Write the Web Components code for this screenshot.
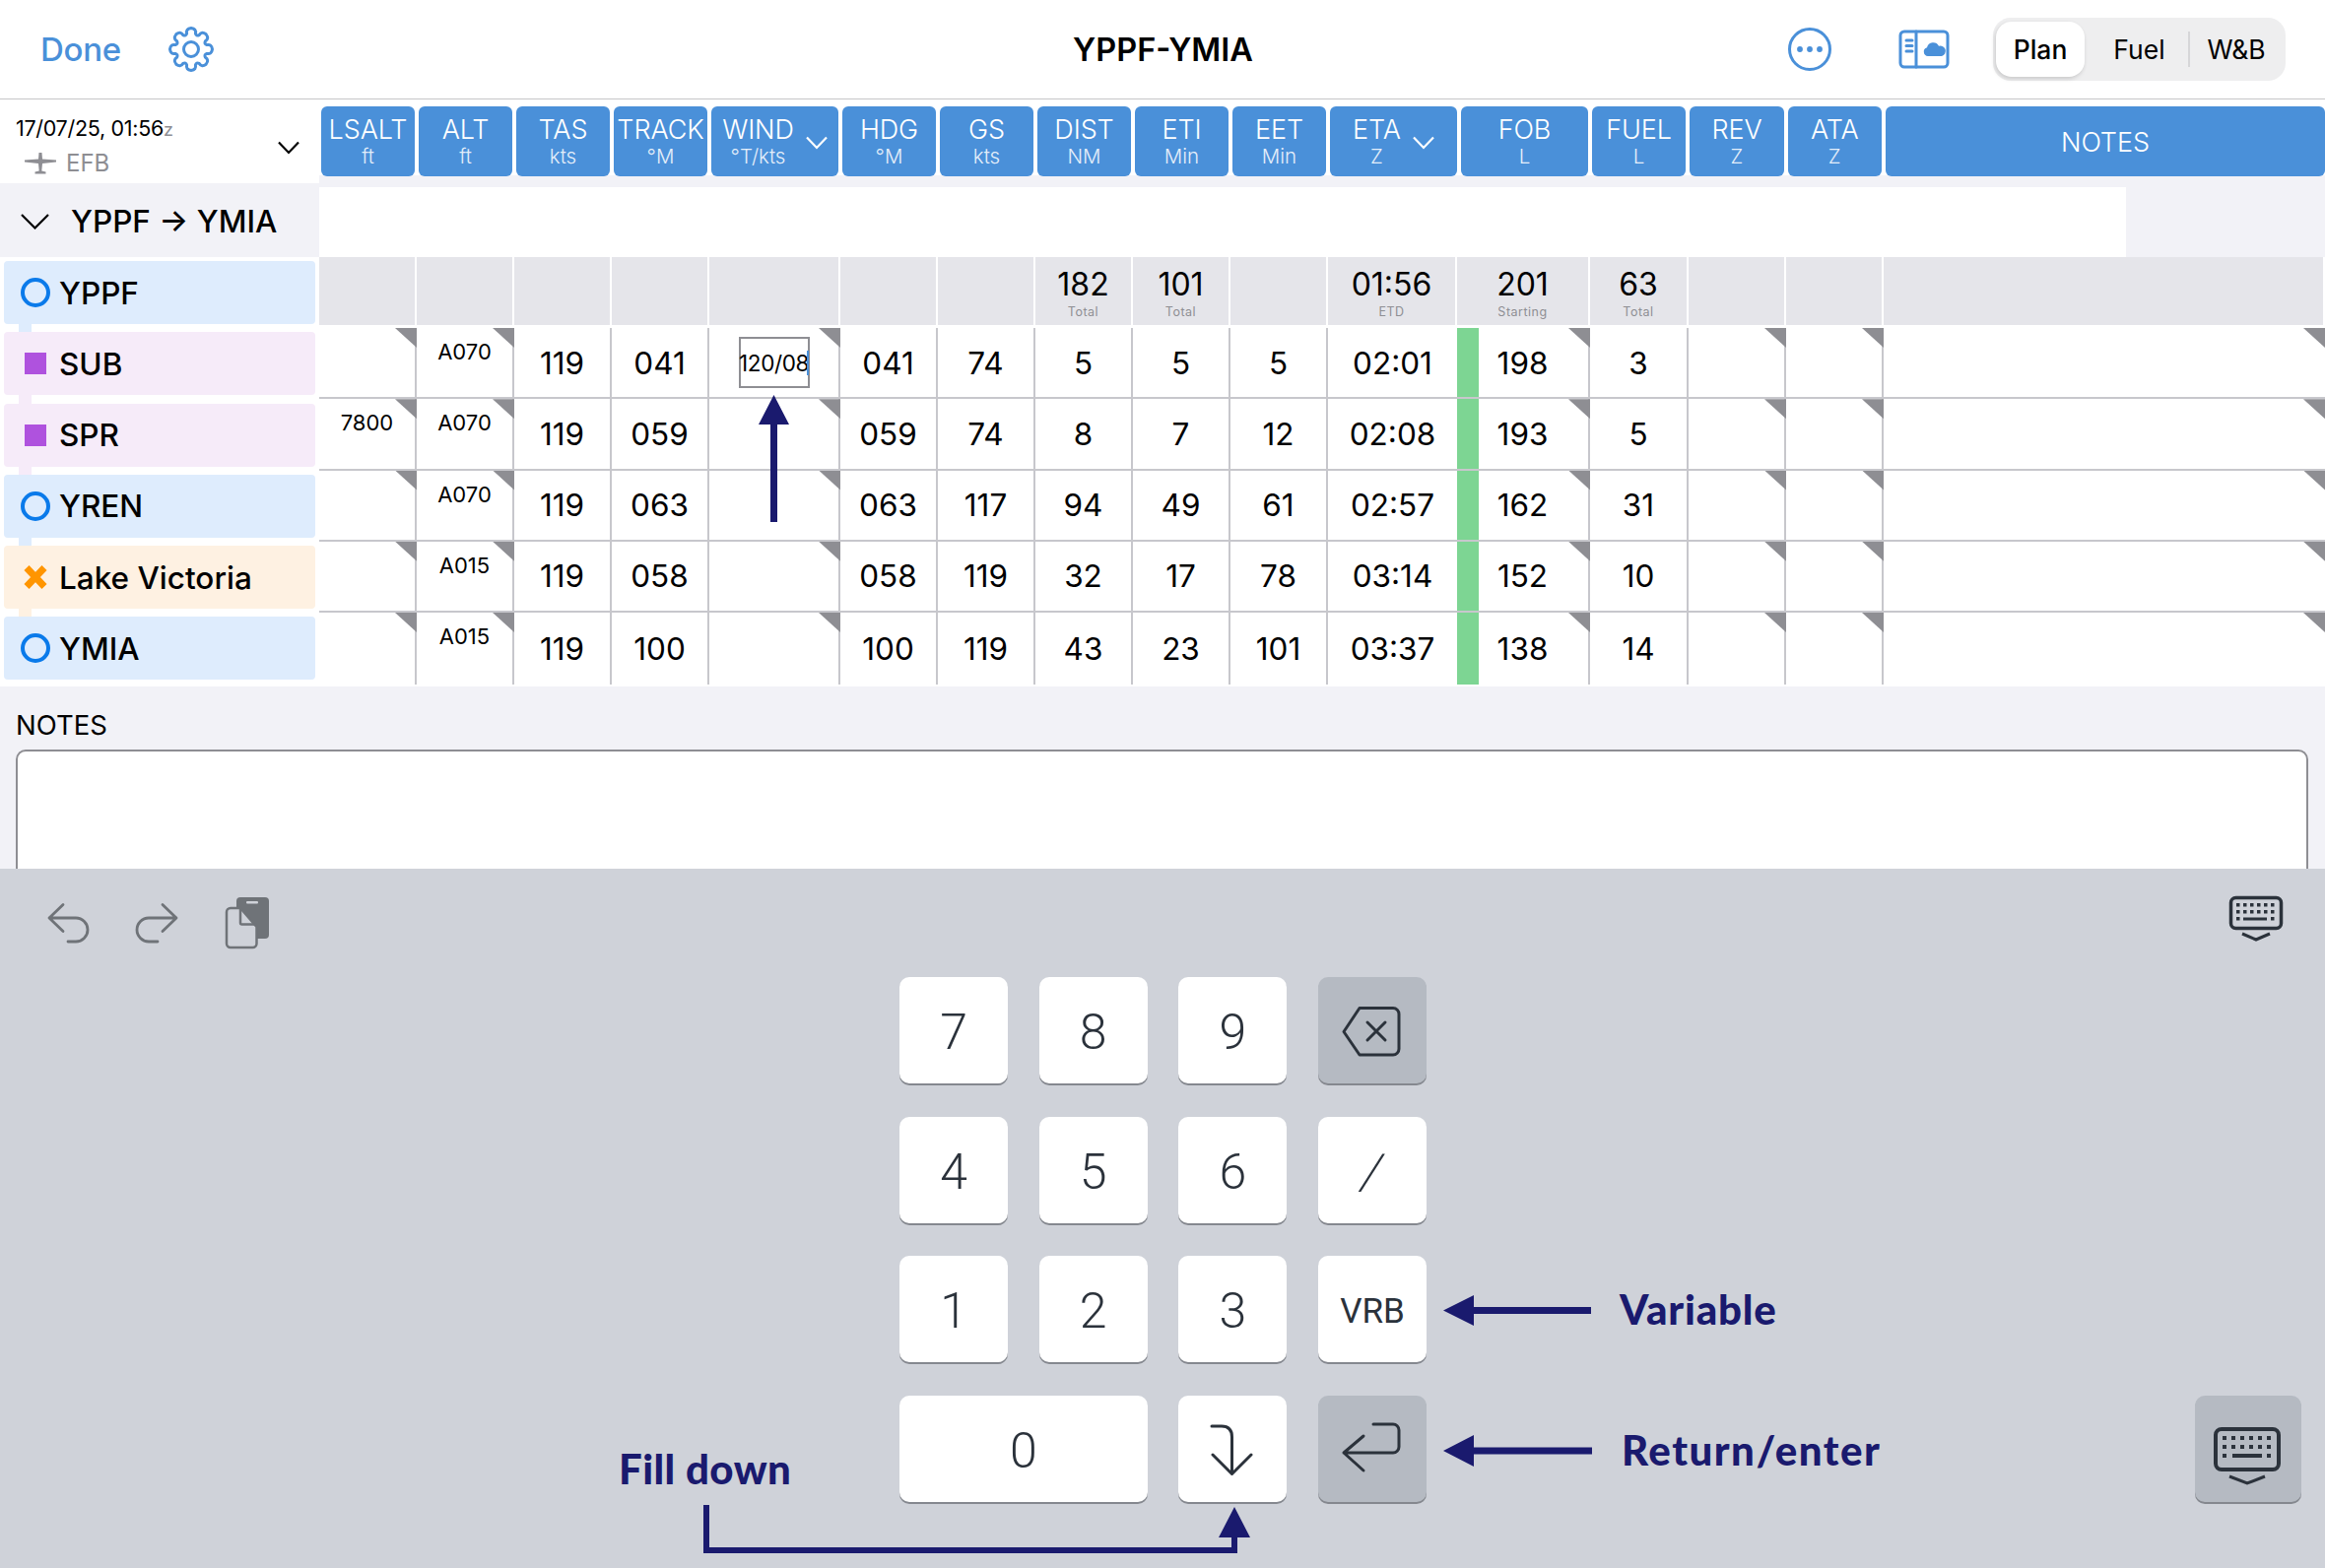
<!DOCTYPE html>
<html>
<head>
<meta charset="utf-8">
<title>YPPF-YMIA</title>
<style>
    html, body{
        margin: 0;
        padding: 0;
        background: #f2f2f7;
    }
    body{
        font-family: 'Inter', 'Liberation Sans', sans-serif;
        color: #000;
    }
</style>
</head>
<body>
<plan-app></plan-app>

<script>
const tpl = (html) => {
    const t = document.createElement('template');
    t.innerHTML = html;
    return t;
};

class Base extends HTMLElement {
    constructor(){
        super();
        this.attachShadow({mode: 'open'});
        this.shadowRoot.appendChild(this.constructor.template.content.cloneNode(true));
    }
}

// 8 teeth, first one pointing up, centred on 25,25
function gearPath(){
    const ro = 21.5, rv = 16.5, step = Math.PI / 4;
    const pt = (r, a) => (25 + r * Math.sin(a)).toFixed(2) + ' ' + (25 - r * Math.cos(a)).toFixed(2);
    let d = '';
    for(let i = 0; i < 8; i++){
        const a = i * step;
        d += (i ? 'L' : 'M') + pt(rv, a - 0.27) + 'Q' + pt(ro, a - 0.26) + ' ' + pt(ro, a) + 'Q' + pt(ro, a + 0.26) + ' ' + pt(rv, a + 0.27);
        d += 'Q' + pt(rv - 2.4, a + step / 2) + ' ' + pt(rv, a + step - 0.27);
    }
    return d + 'Z';
}

class SegControl extends Base {
    static template = tpl(`
    <style>
        :host{
            display: grid;
            grid-template-columns: 90px 105px 98px;
            width: 297px;
            height: 64px;
            box-sizing: border-box;
            padding: 4px 0 4px 3px;
            background: #eeeeef;
            border-radius: 18px;
            font-size: 26.500px;
        }
        div{
            display: flex;
            align-items: center;
            justify-content: center;
        }
        .on{
            background: #fff;
            border-radius: 16px;
            font-weight: 500;
            box-shadow: -1px 2px 4px rgba(0,0,0,.16);
        }
        .mid{
            padding-left: 6px;
        }
        .last{
            position: relative;
        }
        .last::before{
            content: '';
            position: absolute;
            left: 0;
            top: 10px;
            bottom: 10px;
            width: 2px;
            background: #d6d6d8;
        }
    </style>
    <div class="on">Plan</div><div class="mid">Fuel</div><div class="last">W&amp;B</div>`);
}

class NavBar extends Base {
    static template = tpl(`
    <style>
        :host{
            display: grid;
            grid-template-columns: 1fr auto 1fr;
            align-items: center;
            height: 101px;
            box-sizing: border-box;
            padding: 0 40px 0 41px;
            background: #fff;
            border-bottom: 1px solid #c6c6c8;
        }
        .left, .right{
            display: flex;
            align-items: center;
        }
        .right{
            justify-content: flex-end;
        }
        .done{
            color: #4a90d9;
            font-size: 33px;
            font-weight: 550;
            margin-right: 46px;
            letter-spacing: -.3px;
        }
        .title{
            font-size: 32.500px;
            font-weight: 600;
        }
        svg{
            display: block;
            fill: none;
            stroke: #4a90d9;
        }
    </style>
    <div class="left">
        <span class="done">Done</span>
        <svg id="gear" width="50" height="50" viewBox="0 0 50 50" stroke-width="3" stroke-linejoin="round"><path/><circle cx="25" cy="25" r="7.5"/></svg>
    </div>
    <div class="title">YPPF-YMIA</div>
    <div class="right">
        <svg width="46" height="46" viewBox="0 0 46 46" stroke-width="3" style="margin-right:67px">
            <circle cx="23" cy="23" r="20.5"/>
            <g fill="#4a90d9" stroke="none"><circle cx="13" cy="23" r="2.9"/><circle cx="23" cy="23" r="2.9"/><circle cx="33" cy="23" r="2.9"/></g>
        </svg>
        <svg width="52" height="40" viewBox="0 0 52 40" stroke-width="3" style="margin-right:44px">
            <rect x="2" y="2" width="48" height="36" rx="4"/>
            <path d="M18 2V38M8 11H14M8 16.500H14M8 22H14" stroke-linecap="round"/>
            <path fill="#4a90d9" stroke="none" d="M30 27a4.500 4.500 0 0 1-1-8.800a6.500 6.500 0 0 1 12-1.500a5.200 5.200 0 0 1 3 10.300Z"/>
        </svg>
        <seg-control></seg-control>
    </div>`);
    connectedCallback(){
        this.shadowRoot.querySelector('#gear path').setAttribute('d', gearPath());
    }
}

class StationRow extends Base {
    static template = tpl(`
    <style>
        :host{
            display: flex;
            align-items: center;
            position: relative;
            height: 64px;
            padding-left: 17px;
            gap: 9px;
            font-size: 31.500px;
            font-weight: 550;
            border-radius: 4px;
            background: var(--tint);
        }
        :host([kind=airport]){ --tint: #deecfd; }
        :host([kind=point]){ --tint: #f6ebf9; }
        :host([kind=water]){ --tint: #fef1e2; }
        :host(:not([last]))::after{
            content: '';
            position: absolute;
            left: 15px;
            top: 100%;
            width: 13px;
            height: 9px;
            background: var(--tint);
        }
        svg{
            display: block;
            flex: none;
        }
    </style>
    <svg width="30" height="30" viewBox="0 0 30 30"></svg><slot></slot>`);
    connectedCallback(){
        const icons = {
            airport: '<circle cx="15" cy="15" r="13" fill="none" stroke="#0a7aea" stroke-width="4"/>',
            point: '<rect x="4" y="4" width="22" height="22" fill="#af52de"/>',
            water: '<path d="M6 5.500L24 24.500M24 5.500L6 24.500" stroke="#ff9500" stroke-width="7" fill="none"/>'
        };
        this.shadowRoot.querySelector('svg').innerHTML = icons[this.getAttribute('kind')];
    }
}

class SidePanel extends Base {
    static template = tpl(`
    <style>
        :host{
            display: block;
            flex: none;
            width: 324px;
            background: #fff;
        }
        .head{
            display: flex;
            justify-content: space-between;
            height: 85px;
            box-sizing: border-box;
            padding: 16px 20px 0 16px;
        }
        .date{
            font-size: 21.500px;
            line-height: 26px;
            letter-spacing: -.3px;
        }
        .date i{
            font-style: normal;
            font-size: 18px;
            color: #8e8e93;
        }
        .efb{
            display: flex;
            align-items: center;
            margin: 7px 0 0 9px;
            gap: 10px;
            color: #8e8e93;
            font-size: 24px;
            line-height: 28px;
        }
        .chev{
            margin-top: 26px;
        }
        .route{
            display: flex;
            align-items: center;
            gap: 22px;
            height: 75px;
            box-sizing: border-box;
            padding: 2px 0 0 21px;
            background: #f2f2f7;
            font-size: 31.500px;
            font-weight: 550;
        }
        .route svg{
            margin-top: 1px;
        }
        .list{
            display: flex;
            flex-direction: column;
            gap: 8.250px;
            padding: 4px 4px 0;
        }
        svg{
            display: block;
            flex: none;
        }
    </style>
    <div class="head">
        <div>
            <div class="date">17/07/25, 01:56<i>z</i></div>
            <div class="efb">
                <svg width="32" height="22" viewBox="0 0 32 22" fill="#8e8e93"><path d="M14.500 0h3l.5 6.500L32 7.500v2L18 11l-.7 7.500 4.200 1v2h-11v-2l4.200-1L14 11 0 9.500v-2l14-1Z"/></svg>
                EFB
            </div>
        </div>
        <svg class="chev" width="22" height="14" viewBox="0 0 22 14" fill="none" stroke="#000" stroke-width="2.200"><path d="M1 1.500L11 12L21 1.500"/></svg>
    </div>
    <div class="route">
        <svg width="29" height="16" viewBox="0 0 29 16" fill="none" stroke="#000" stroke-width="2.200"><path d="M1 1L14.500 14.500L28 1"/></svg>
        <span>YPPF → YMIA</span>
    </div>
    <div class="list">
        <station-row kind="airport">YPPF</station-row>
        <station-row kind="point">SUB</station-row>
        <station-row kind="point">SPR</station-row>
        <station-row kind="airport">YREN</station-row>
        <station-row kind="water">Lake Victoria</station-row>
        <station-row kind="airport" last>YMIA</station-row>
    </div>`);
}

class HeadCell extends Base {
    static template = tpl(`
    <style>
        :host{
            display: flex;
            align-items: center;
            justify-content: center;
            gap: 12px;
            height: 71px;
            background: #4a90d9;
            border-radius: 6px;
            color: #fff;
            text-align: center;
        }
        .t{
            display: block;
            font-size: 27px;
            font-weight: 350;
            line-height: 32px;
            letter-spacing: -.1px;
            padding-top: 2px;
        }
        .s{
            display: block;
            font-size: 20.500px;
            font-weight: 350;
            line-height: 22px;
            color: #e4eefa;
            margin-bottom: 3px;
        }
        :host([single]) .s{
            display: none;
        }
        svg{
            display: none;
            margin-top: 3px;
        }
        :host([drop]) svg{
            display: block;
        }
    </style>
    <div><span class="t"><slot></slot></span><span class="s"><slot name="sub"></slot></span></div>
    <svg width="22" height="14" viewBox="0 0 22 14" fill="none" stroke="#fff" stroke-width="2.200"><path d="M1 1.500L11 12L21 1.500"/></svg>`);
}

class FlowCell extends Base {
    static template = tpl(`
    <style>
        :host{
            display: flex;
            align-items: center;
            justify-content: center;
            position: relative;
            box-sizing: border-box;
            border-right: 2px solid #c7c7cc;
            font-size: 31.500px;
            min-width: 0;
        }
        :host([mark])::after{
            content: '';
            position: absolute;
            top: 0;
            right: -2px;
            width: 22px;
            height: 20px;
            background: #8e8e93;
            clip-path: polygon(0 0, 100% 0, 100% 100%);
        }
        :host([small]){
            align-items: flex-start;
            padding-top: 11px;
            font-size: 22px;
        }
        :host([green]){
            background: linear-gradient(90deg, #7dd593 22px, #fff 22px);
        }
        :host([edge]){
            border-right: 0;
        }
        :host([mark][edge])::after{
            right: 0;
        }
        :host([input]) .box{
            display: flex;
            align-items: center;
            justify-content: center;
            position: relative;
            width: 72px;
            height: 52px;
            box-sizing: border-box;
            border: 2px solid #8e8e93;
            font-size: 22.500px;
            letter-spacing: -.4px;
            white-space: nowrap;
        }
        :host([input]) .box::after{
            content: '';
            position: absolute;
            right: -1px;
            top: 12px;
            height: 25px;
            width: 2px;
            background: #4a90d9;
        }
    </style>
    <div class="box"><slot></slot></div>`);
}

class TotalCell extends Base {
    static template = tpl(`
    <style>
        :host{
            display: flex;
            flex-direction: column;
            align-items: center;
            box-sizing: border-box;
            padding-top: 10px;
            background: #e5e5ea;
            border-right: 2px solid #fff;
            font-size: 32px;
            line-height: 36px;
        }
        span{
            font-size: 12.500px;
            line-height: 16px;
            color: #8e8e93;
            letter-spacing: .5px;
            margin-top: 2px;
        }
    </style>
    <slot></slot><span><slot name="note"></slot></span>`);
}

class GridRow extends Base {
    static template = tpl(`
    <style>
        :host{
            display: grid;
            grid-template-columns: var(--cols);
            box-sizing: border-box;
            height: 72.250px;
            background: #fff;
            border-bottom: 2px solid #c7c7cc;
        }
        :host([totals]){
            height: 72px;
            padding-bottom: 3px;
            border: 0;
        }
        :host([last]){
            height: 75px;
            padding-bottom: 2px;
            border: 0;
        }
    </style>
    <slot></slot>`);
}

class PlanTable extends Base {
    static template = tpl(`
    <style>
        :host{
            display: block;
            flex: 1;
            min-width: 0;
            --cols: 99px 99px 99px 99px 133px 99px 99px 99px 99px 99px 131px 135px 100px 99px 99px 1fr;
        }
        .heads{
            display: grid;
            grid-template-columns: repeat(4, 95px) 129px repeat(5, 95px) 129px 129px repeat(3, 95.300px) 1fr;
            gap: 4px;
            padding: 7px 0 11px 2px;
            background: linear-gradient(#fff 77px, #f2f2f7 77px);
        }
        .blank{
            width: 1834px;
            height: 71px;
            background: #fff;
        }
    </style>
    <div class="heads"></div>
    <div class="blank"></div>
    <div class="rows"></div>`);
    connectedCallback(){
        const heads = [['LSALT','ft'],['ALT','ft'],['TAS','kts'],['TRACK','°M'],['WIND','°T/kts',1],['HDG','°M'],['GS','kts'],['DIST','NM'],['ETI','Min'],['EET','Min'],['ETA','Z',1],['FOB','L'],['FUEL','L'],['REV','Z'],['ATA','Z'],['NOTES','']];
        this.shadowRoot.querySelector('.heads').innerHTML = heads.map(h =>
            `<head-cell ${h[2] ? 'drop' : ''} ${h[1] ? '' : 'single'}>${h[0]}<span slot="sub">${h[1]}</span></head-cell>`).join('');

        const totals = {7:['182','Total'], 8:['101','Total'], 10:['01:56','ETD'], 11:['201','Starting'], 12:['63','Total']};
        let html = '<grid-row totals>';
        for(let i = 0; i < 16; i++){
            const t = totals[i];
            html += t ? `<total-cell>${t[0]}<span slot="note">${t[1]}</span></total-cell>` : '<total-cell></total-cell>';
        }
        html += '</grid-row>';

        const rows = [
            ['', 'A070', '119', '041', '120/08', '041', '74', '5', '5', '5', '02:01', '198', '3'],
            ['7800', 'A070', '119', '059', '', '059', '74', '8', '7', '12', '02:08', '193', '5'],
            ['', 'A070', '119', '063', '', '063', '117', '94', '49', '61', '02:57', '162', '31'],
            ['', 'A015', '119', '058', '', '058', '119', '32', '17', '78', '03:14', '152', '10'],
            ['', 'A015', '119', '100', '', '100', '119', '43', '23', '101', '03:37', '138', '14']
        ];
        rows.forEach((r, n) => {
            html += `<grid-row ${n === 4 ? 'last' : ''}>`;
            r.concat(['', '', '']).forEach((v, i) => {
                let a = '';
                if([0, 1, 4, 11, 13, 14, 15].includes(i)) a += ' mark';
                if(i < 2) a += ' small';
                if(i === 4 && v) a += ' input';
                if(i === 11) a += ' green';
                if(i === 10 || i === 15) a += ' edge';
                html += `<flow-cell${a}>${v}</flow-cell>`;
            });
            html += '</grid-row>';
        });
        this.shadowRoot.querySelector('.rows').innerHTML = html;
    }
}

class MainArea extends Base {
    static template = tpl(`
    <style>
        :host{
            display: flex;
        }
    </style>
    <side-panel></side-panel><plan-table></plan-table>`);
}

class NotesBox extends Base {
    static template = tpl(`
    <style>
        :host{
            display: block;
            flex: 1;
            min-height: 0;
            overflow: hidden;
            padding: 23px 17px 0 16px;
            background: #f2f2f7;
        }
        .label{
            font-size: 27.500px;
            line-height: 32px;
        }
        .area{
            height: 200px;
            margin-top: 9px;
            box-sizing: border-box;
            background: #fff;
            border: 2px solid #8e8e93;
            border-radius: 10px;
        }
    </style>
    <div class="label">NOTES</div>
    <div class="area"></div>`);
}

class KeyCap extends Base {
    static template = tpl(`
    <style>
        :host{
            display: flex;
            align-items: center;
            justify-content: center;
            height: 108px;
            box-sizing: border-box;
            padding-top: 4px;
            background: #fff;
            border-radius: 10px;
            box-shadow: 0 2px 0 #85888f;
            color: #2b323b;
            font-family: 'Roboto', 'Liberation Sans', sans-serif;
            font-size: 50px;
            font-weight: 350;
        }
        :host([icon]){
            padding-top: 0;
        }
        :host([dark]){
            background: #b5bac2;
        }
        :host([wide]){
            grid-column: span 2;
        }
        :host([label]){
            font-size: 35px;
            font-weight: 400;
        }
    </style>
    <slot></slot>`);
}

class NumKeyboard extends Base {
    static template = tpl(`
    <style>
        :host{
            display: block;
            flex: none;
            height: 710px;
            background: #cfd2d9;
        }
        .tools{
            display: flex;
            align-items: flex-start;
            height: 110px;
            box-sizing: border-box;
            padding: 26px 40px 0 47px;
        }
        .tools svg{
            display: block;
        }
        .pad{
            display: flex;
            padding: 0 24.500px 0 913px;
        }
        .keys{
            display: grid;
            grid-template-columns: repeat(4, 110px);
            grid-auto-rows: 108px;
            column-gap: 31.700px;
            row-gap: 33.700px;
        }
        .hide{
            width: 108px;
            margin-left: auto;
            align-self: flex-end;
        }
        .slash{
            display: inline-block;
            transform: skewX(-14deg);
        }
        svg{
            display: block;
            fill: none;
            stroke: #2b323b;
        }
    </style>
    <div class="tools">
        <svg width="44" height="58" viewBox="47 908 44 58" style="stroke:#6f7378" stroke-width="2.800" stroke-linecap="round" stroke-linejoin="round">
            <path d="M64 918.500L50 932L64 945.500M50 932H77a12 12 0 0 1 0 24H69"/>
        </svg>
        <svg width="44" height="58" viewBox="137 908 44 58" style="stroke:#6f7378;margin-left:46px" stroke-width="2.800" stroke-linecap="round" stroke-linejoin="round">
            <path d="M165 918.500L179 932L165 945.500M179 932H151a12 12 0 0 0 0 24H160"/>
        </svg>
        <svg width="48" height="58" viewBox="226 908 48 58" style="stroke:none;margin-left:46px">
            <rect x="239" y="911" width="33" height="42" rx="4" fill="#6f7378"/>
            <rect x="249" y="915" width="12" height="2.500" rx="1" fill="#cfd2d9"/>
            <path d="M233 922H243L259.500 941V958a4 4 0 0 1-4 4H233a4 4 0 0 1-4-4V926a4 4 0 0 1 4-4Z" fill="#cfd2d9" stroke-width="2.500" style="stroke:#6f7378"/>
            <path d="M243 922V937a1.500 1.500 0 0 0 1.500 1.500H259.500" stroke-width="2.500" style="stroke:#6f7378"/>
        </svg>
        <svg width="60" height="58" viewBox="2260 908 60 58" style="margin-left:auto" stroke-width="3.500">
            <rect x="2264.500" y="911.500" width="51" height="31" rx="5"/>
            <g fill="#2b323b" stroke="none">
                <rect x="2270" y="917" width="3.500" height="3.500"/><rect x="2277" y="917" width="3.500" height="3.500"/><rect x="2284" y="917" width="3.500" height="3.500"/><rect x="2291" y="917" width="3.500" height="3.500"/><rect x="2298" y="917" width="3.500" height="3.500"/><rect x="2305" y="917" width="3.500" height="3.500"/>
                <rect x="2270" y="924" width="3.500" height="3.500"/><rect x="2277" y="924" width="3.500" height="3.500"/><rect x="2284" y="924" width="3.500" height="3.500"/><rect x="2291" y="924" width="3.500" height="3.500"/><rect x="2298" y="924" width="3.500" height="3.500"/><rect x="2305" y="924" width="3.500" height="3.500"/>
                <rect x="2270" y="931" width="3.500" height="3.500"/><rect x="2277" y="931.500" width="24" height="3"/><rect x="2305" y="931" width="3.500" height="3.500"/>
            </g>
            <path d="M2276 948L2290 954L2304 948" stroke-width="3"/>
        </svg>
    </div>
    <div class="pad">
        <div class="keys">
            <key-cap>7</key-cap><key-cap>8</key-cap><key-cap>9</key-cap>
            <key-cap dark icon>
                <svg width="110" height="108" viewBox="1338 992 110 108" stroke-width="3" stroke-linejoin="round" stroke-linecap="round">
                    <path d="M1380 1023.500H1414a6 6 0 0 1 6 6V1065a6 6 0 0 1-6 6H1380L1364 1047.500Z"/>
                    <path d="M1388 1038L1406 1056M1406 1038L1388 1056"/>
                </svg>
            </key-cap>
            <key-cap>4</key-cap><key-cap>5</key-cap><key-cap>6</key-cap><key-cap><span class="slash">/</span></key-cap>
            <key-cap>1</key-cap><key-cap>2</key-cap><key-cap>3</key-cap><key-cap label>VRB</key-cap>
            <key-cap wide>0</key-cap>
            <key-cap icon>
                <svg width="110" height="108" viewBox="1196 1417 110 108" stroke-width="3" stroke-linecap="round" stroke-linejoin="round">
                    <path d="M1230 1448H1240q10.500 0 10.500 11V1496M1231 1477L1250.500 1496.500L1270 1477"/>
                </svg>
            </key-cap>
            <key-cap dark icon>
                <svg width="110" height="108" viewBox="1338 1417 110 108" stroke-width="3" stroke-linecap="round" stroke-linejoin="round">
                    <path d="M1384 1458L1364 1475L1384 1493M1364 1475H1414a6 6 0 0 0 6-6V1452a6 6 0 0 0-6-6H1394"/>
                </svg>
            </key-cap>
        </div>
        <key-cap dark icon class="hide">
            <svg width="108" height="108" viewBox="2228 1417 108 108" stroke-width="4">
                <rect x="2249" y="1451" width="64" height="41" rx="6"/>
                <g fill="#2b323b" stroke="none">
                    <rect x="2256" y="1458" width="4" height="4"/><rect x="2265" y="1458" width="4" height="4"/><rect x="2274" y="1458" width="4" height="4"/><rect x="2283" y="1458" width="4" height="4"/><rect x="2292" y="1458" width="4" height="4"/><rect x="2301" y="1458" width="4" height="4"/>
                    <rect x="2256" y="1467" width="4" height="4"/><rect x="2265" y="1467" width="4" height="4"/><rect x="2274" y="1467" width="4" height="4"/><rect x="2283" y="1467" width="4" height="4"/><rect x="2292" y="1467" width="4" height="4"/><rect x="2301" y="1467" width="4" height="4"/>
                    <rect x="2256" y="1476" width="4" height="4"/><rect x="2266" y="1476" width="30" height="4"/><rect x="2301" y="1476" width="4" height="4"/>
                </g>
                <path d="M2263 1499L2281 1506L2299 1499" stroke-width="3"/>
            </svg>
        </key-cap>
    </div>`);
}

// the navy callouts painted on top of the screenshot
class AnnoLayer extends Base {
    static template = tpl(`
    <style>
        :host{
            display: block;
            position: absolute;
            inset: 0;
            pointer-events: none;
        }
        svg{
            position: absolute;
            inset: 0;
        }
        span{
            position: absolute;
            color: #1a1a6e;
            font-family: 'Lato', 'Liberation Sans', sans-serif;
            font-weight: 900;
            font-size: 42px;
            line-height: 48px;
            white-space: nowrap;
        }
    </style>
    <svg width="2360" height="1592" viewBox="0 0 2360 1592" fill="#1a1a6e">
        <path d="M785.500 401L801 431H789V530H782V431H770Z"/>
        <path d="M1465 1330.500L1496 1315V1327H1615V1334H1496V1346Z"/>
        <path d="M1465 1473L1496 1457V1469.500H1616V1476.500H1496V1489Z"/>
        <path d="M1253 1530L1269 1561H1256V1577H714V1528H720V1571H1250V1561H1237Z"/>
    </svg>
    <span style="left:1644px;top:1305px;letter-spacing:.8px">Variable</span>
    <span style="left:1646px;top:1448px;letter-spacing:1.500px">Return/enter</span>
    <span style="left:628px;top:1467px;letter-spacing:.4px">Fill down</span>`);
}

class PlanApp extends Base {
    static template = tpl(`
    <style>
        :host{
            display: flex;
            flex-direction: column;
            position: relative;
            width: 2360px;
            height: 1592px;
            overflow: hidden;
            background: #f2f2f7;
        }
    </style>
    <nav-bar></nav-bar>
    <main-area></main-area>
    <notes-box></notes-box>
    <num-keyboard></num-keyboard>
    <anno-layer></anno-layer>`);
}

customElements.define('seg-control', SegControl);
customElements.define('nav-bar', NavBar);
customElements.define('station-row', StationRow);
customElements.define('side-panel', SidePanel);
customElements.define('head-cell', HeadCell);
customElements.define('flow-cell', FlowCell);
customElements.define('total-cell', TotalCell);
customElements.define('grid-row', GridRow);
customElements.define('plan-table', PlanTable);
customElements.define('main-area', MainArea);
customElements.define('notes-box', NotesBox);
customElements.define('key-cap', KeyCap);
customElements.define('num-keyboard', NumKeyboard);
customElements.define('anno-layer', AnnoLayer);
customElements.define('plan-app', PlanApp);
</script>
</body>
</html>
